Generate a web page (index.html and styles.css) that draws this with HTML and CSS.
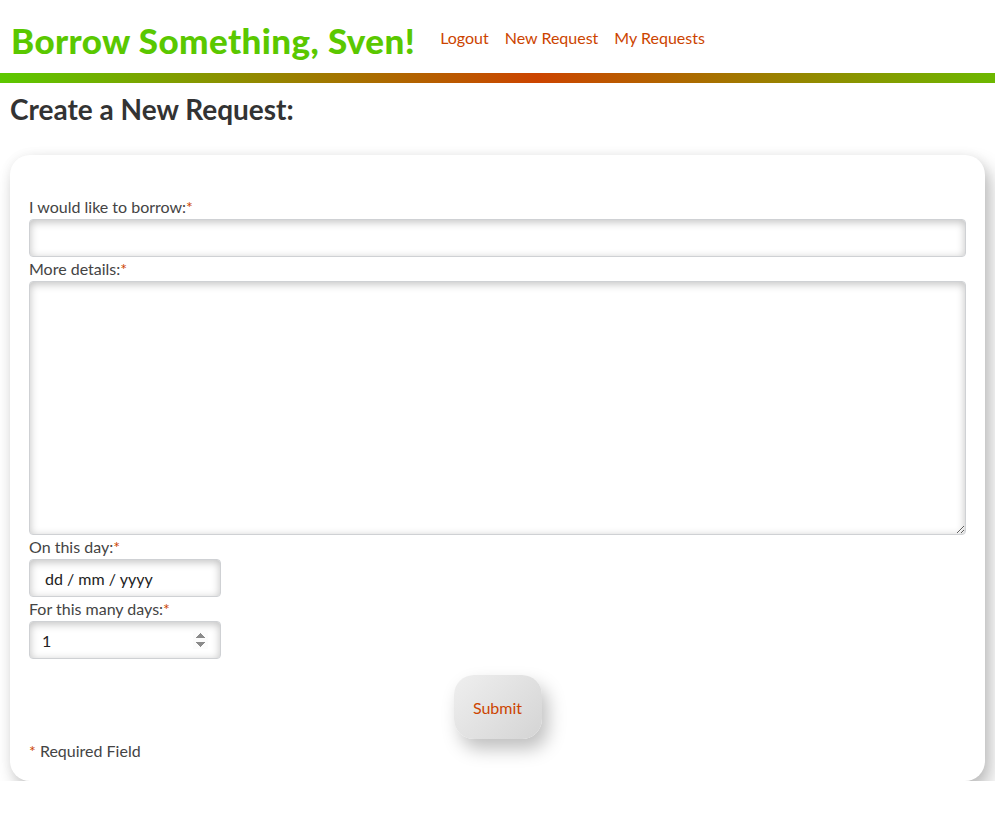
FILE: index.html
```html
<!DOCTYPE html>
<html lang="en">
<head>
<meta charset="utf-8">
<title>Borrow Something</title>
<link rel="stylesheet" href="styles.css">
</head>
<body>
<header class="site-header">
  <h1 class="brand">Borrow Something, Sven!</h1>
  <nav class="nav">
    <a href="#">Logout</a>
    <a href="#">New Request</a>
    <a href="#">My Requests</a>
  </nav>
</header>
<div class="bar"></div>
<main class="main">
  <h2 class="page-title">Create a New Request:</h2>
  <form class="card">
    <label class="label" for="item">I would like to borrow:<span class="req">*</span></label>
    <input class="field" id="item" type="text">
    <label class="label" for="details">More details:<span class="req">*</span></label>
    <textarea class="field area" id="details"></textarea>
    <label class="label" for="day">On this day:<span class="req">*</span></label>
    <input class="field short date" id="day" type="text" placeholder="dd / mm / yyyy">
    <label class="label" for="days">For this many days:<span class="req">*</span></label>
    <input class="field short" id="days" type="number" value="1">
    <div class="actions">
      <button class="submit" type="button">Submit</button>
    </div>
    <p class="note"><span class="req">*</span> Required Field</p>
  </form>
</main>
</body>
</html>
```
FILE: styles.css
```css
html, body {
  margin: 0;
  padding: 0;
  background: #fff;
  font-family: "Lato", "Noto Sans", sans-serif;
  color: #444;
}

.site-header {
  display: flex;
  align-items: center;
  height: 73px;
  box-sizing: border-box;
  padding: 6px 11px 0;
  gap: 25px;
}

.brand {
  margin: 0;
  font-size: 35px;
  font-weight: 900;
  color: #5ac800;
  letter-spacing: 0.4px;
}

.nav {
  display: flex;
  gap: 16px;
  margin-top: -4px;
}

.nav a {
  color: #cc4400;
  text-decoration: none;
  font-size: 16px;
}

.bar {
  height: 10px;
  background: linear-gradient(to right, #5cc800 0%, #cc4400 54%, #6cb800 100%);
}

.main {
  padding: 0 10px;
}

.page-title {
  margin: 9px 0 29px;
  font-size: 28px;
  font-weight: 700;
  color: #333;
}

.card {
  display: flex;
  flex-direction: column;
  align-items: flex-start;
  background: #fff;
  border-radius: 20px;
  padding: 40px 19px 20px;
  box-shadow: 6px 10px 18px rgba(0, 0, 0, 0.25), 0 0 12px rgba(0, 0, 0, 0.05);
}

.label {
  display: block;
  height: 24px;
  line-height: 24px;
  font-size: 16px;
  color: #444;
}

.req {
  color: #cc4400;
}

.field {
  box-sizing: border-box;
  width: 100%;
  height: 38px;
  margin: 0;
  border: 1px solid #cfd1d4;
  border-radius: 4px;
  background: #fff;
  box-shadow: inset 0 2px 8px rgba(0, 0, 0, 0.25);
  font-family: inherit;
  font-size: 16px;
  color: #222;
  padding: 0 12px;
  outline: none;
}

.area {
  height: 254px;
  resize: vertical;
}

.short {
  width: 192px;
}

.date {
  padding-left: 15px;
}

.date::placeholder {
  color: #222;
}

input[type=number]::-webkit-inner-spin-button {
  opacity: 1;
}

.actions {
  align-self: stretch;
  display: flex;
  justify-content: center;
  margin-top: 16px;
}

.submit {
  width: 88px;
  height: 64px;
  border: none;
  border-radius: 20px;
  background: linear-gradient(135deg, #efefef, #d4d4d4);
  box-shadow: 6px 10px 18px rgba(0, 0, 0, 0.25);
  color: #cc4400;
  font-family: inherit;
  font-size: 16px;
  cursor: pointer;
}

.note {
  margin: 2px 0 0;
  line-height: 20px;
  font-size: 16px;
  color: #444;
}
```
